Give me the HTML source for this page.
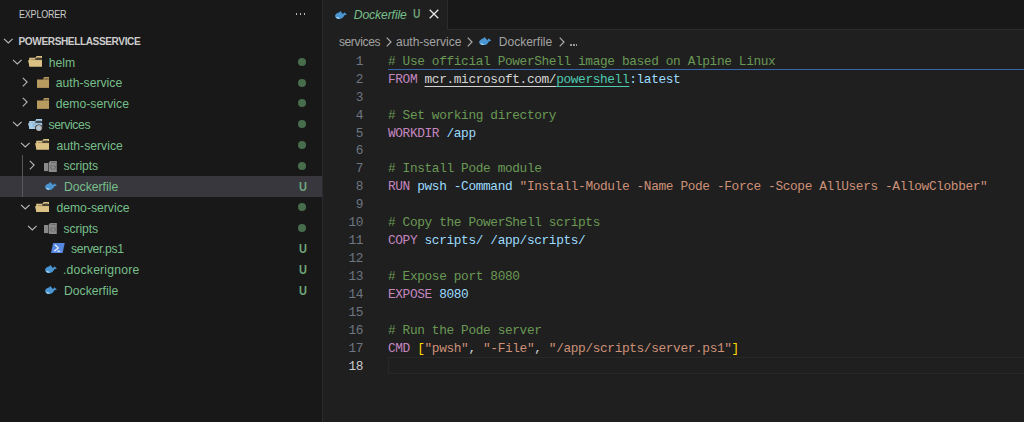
<!DOCTYPE html><html><head><meta charset="utf-8"><style>
html,body{margin:0;padding:0;width:1024px;height:422px;overflow:hidden;background:#1f1f1f;}
.a{position:absolute;}
.t{position:absolute;white-space:pre;font-family:"Liberation Sans",sans-serif;}
.row{position:absolute;left:0;width:322px;height:20.75px;}
.lbl{position:absolute;white-space:pre;font-family:"Liberation Sans",sans-serif;font-size:12.2px;line-height:20.75px;top:1px;color:#77bf8a;}
.dot{position:absolute;left:298.3px;width:8px;height:8px;border-radius:50%;background:#476d4d;top:6.375px;}
.u{position:absolute;left:299.3px;top:1px;line-height:20.75px;font-family:"Liberation Sans",sans-serif;font-size:12.2px;font-weight:bold;transform:scaleX(0.9);transform-origin:0 0;color:#70a87c;}
.ln{position:absolute;left:330px;width:33px;text-align:right;font-family:"Liberation Mono",monospace;font-size:12.8px;letter-spacing:-0.3700000000000001px;line-height:17.95px;color:#6e7681;white-space:pre;}
.cl{position:absolute;left:388.0px;font-family:"Liberation Mono",monospace;font-size:12.8px;letter-spacing:-0.3700000000000001px;line-height:17.95px;color:#cccccc;white-space:pre;}
.c{color:#6a9955} .k{color:#c586c0} .s{color:#ce9178} .v{color:#9cdcfe} .w{color:#d4d4d4} .g{color:#4ec9b0} .b{color:#ffd700}
</style></head><body>
<div class="a" style="left:0;top:0;width:322px;height:422px;background:#181818;"></div>
<div class="a" style="left:321.5px;top:0;width:1px;height:422px;background:#2b2b2b;"></div>
<div class="t" style="left:18.5px;top:7.1px;font-size:10.3px;line-height:16px;letter-spacing:-0.2px;transform:scaleX(0.87);transform-origin:0 0;color:#cccccc;">EXPLORER</div>
<div class="a" style="left:295.8px;top:13.2px;width:1.7px;height:1.7px;background:#c4c4c4;border-radius:0.3px"></div>
<div class="a" style="left:299.8px;top:13.2px;width:1.7px;height:1.7px;background:#c4c4c4;border-radius:0.3px"></div>
<div class="a" style="left:303.8px;top:13.2px;width:1.7px;height:1.7px;background:#c4c4c4;border-radius:0.3px"></div>
<svg class="a" style="left:3.4px;top:38.0px" width="11" height="7" viewBox="0 0 11 7"><path d="M1 0.8 L5.3 5 L9.6 0.8" fill="none" stroke="#b6b6b6" stroke-width="1.15"/></svg>
<div class="t" style="left:18.5px;top:31.8px;font-size:10.1px;line-height:20px;font-weight:bold;letter-spacing:-0.4px;color:#cccccc;">POWERSHELLASSERVICE</div>
<div class="row" style="top:51.50px;">
<svg class="a" style="left:12.0px;top:7.0px" width="11" height="7" viewBox="0 0 11 7"><path d="M1 0.8 L5.3 5 L9.6 0.8" fill="none" stroke="#b6b6b6" stroke-width="1.15"/></svg>
<svg class="a" style="left:27.8px;top:4.8px" width="14" height="10.5" viewBox="0 0 14 10.5"><path d="M7.1 2.2 L8.6 0 H14 V2.2 Z" fill="#dcc185"/><path d="M1.2 1.8 H7.4 V4 H14 V10.4 H1.2 Z" fill="#dcc185"/><rect x="3" y="3.5" width="11" height="0.8" fill="#7a6b4e"/><rect x="8.6" y="1.1" width="4.6" height="0.8" fill="#8d7c5a"/><path d="M0 4.3 H14 V10.4 H1.6 Z" fill="#dcc185"/></svg>
<div class="lbl" style="left:48.8px;letter-spacing:0px">helm</div>
<div class="dot"></div>
</div>
<div class="row" style="top:72.25px;">
<svg class="a" style="left:21.6px;top:4.4px" width="7" height="11" viewBox="0 0 7 11"><path d="M0.8 0.8 L5.1 5.1 L0.8 9.4" fill="none" stroke="#b6b6b6" stroke-width="1.15"/></svg>
<svg class="a" style="left:36.8px;top:4.5px" width="12.6" height="11" viewBox="0 0 12.6 11"><path d="M6 2.6 L7 0 H12.6 V2.6 Z" fill="#b99a5f"/><path d="M0 2.5 H12.6 V10.9 H0 Z" fill="#b99a5f"/><rect x="7.4" y="1.1" width="4.2" height="0.9" fill="#7b6642"/></svg>
<div class="lbl" style="left:55.8px;letter-spacing:0px">auth-service</div>
<div class="dot"></div>
</div>
<div class="row" style="top:93.00px;">
<svg class="a" style="left:21.6px;top:4.4px" width="7" height="11" viewBox="0 0 7 11"><path d="M0.8 0.8 L5.1 5.1 L0.8 9.4" fill="none" stroke="#b6b6b6" stroke-width="1.15"/></svg>
<svg class="a" style="left:36.8px;top:4.5px" width="12.6" height="11" viewBox="0 0 12.6 11"><path d="M6 2.6 L7 0 H12.6 V2.6 Z" fill="#b99a5f"/><path d="M0 2.5 H12.6 V10.9 H0 Z" fill="#b99a5f"/><rect x="7.4" y="1.1" width="4.2" height="0.9" fill="#7b6642"/></svg>
<div class="lbl" style="left:55.8px;letter-spacing:0px">demo-service</div>
<div class="dot"></div>
</div>
<div class="row" style="top:113.75px;">
<svg class="a" style="left:12.0px;top:7.0px" width="11" height="7" viewBox="0 0 11 7"><path d="M1 0.8 L5.3 5 L9.6 0.8" fill="none" stroke="#b6b6b6" stroke-width="1.15"/></svg>
<svg class="a" style="left:27.8px;top:5.2px" width="15" height="13" viewBox="0 0 15 13"><path d="M7.1 2.2 L8.3 0 H14.1 V2.2 Z" fill="#a7cde8"/><path d="M1.2 1.9 H7.4 V4.2 H14.1 V10 H1.2 Z" fill="#a7cde8"/><rect x="8.6" y="1" width="4.8" height="0.7" fill="#7f9bb0"/><rect x="3" y="3.6" width="11" height="0.7" fill="#7f9bb0"/><path d="M0 4.3 H14.1 V10 H1.6 Z" fill="#a7cde8"/><circle cx="6.4" cy="6.4" r="1.4" fill="none" stroke="#88a0b2" stroke-width="0.8"/><circle cx="10.9" cy="9.1" r="3.7" fill="#181818"/><circle cx="10.9" cy="9.1" r="2.3" fill="#a9c9de" stroke="#b5b5b5" stroke-width="1.4"/></svg>
<div class="lbl" style="left:48.4px;letter-spacing:-0.35px">services</div>
<div class="dot"></div>
</div>
<div class="row" style="top:134.50px;">
<svg class="a" style="left:19.6px;top:7.0px" width="11" height="7" viewBox="0 0 11 7"><path d="M1 0.8 L5.3 5 L9.6 0.8" fill="none" stroke="#b6b6b6" stroke-width="1.15"/></svg>
<svg class="a" style="left:35.4px;top:4.8px" width="14" height="10.5" viewBox="0 0 14 10.5"><path d="M7.1 2.2 L8.6 0 H14 V2.2 Z" fill="#dcc185"/><path d="M1.2 1.8 H7.4 V4 H14 V10.4 H1.2 Z" fill="#dcc185"/><rect x="3" y="3.5" width="11" height="0.8" fill="#7a6b4e"/><rect x="8.6" y="1.1" width="4.6" height="0.8" fill="#8d7c5a"/><path d="M0 4.3 H14 V10.4 H1.6 Z" fill="#dcc185"/></svg>
<div class="lbl" style="left:56.4px;letter-spacing:0px">auth-service</div>
<div class="dot"></div>
</div>
<div class="row" style="top:155.25px;">
<svg class="a" style="left:29.200000000000003px;top:4.4px" width="7" height="11" viewBox="0 0 7 11"><path d="M0.8 0.8 L5.1 5.1 L0.8 9.4" fill="none" stroke="#b6b6b6" stroke-width="1.15"/></svg>
<svg class="a" style="left:44.3px;top:5.3px" width="13" height="12" viewBox="0 0 13 12"><rect x="0" y="2" width="4.4" height="8.1" fill="#8a8a8a"/><path d="M4.9 1.5 L6.3 0 H12.8 V11 H4.9 Z" fill="#8a8a8a"/><rect x="7.2" y="0.9" width="4.6" height="0.7" fill="#5c5c5c"/><path d="M8.1 4.2 L6.6 6.4 L8.1 8.6 M10.1 4.2 L11.5 6.4 L10.1 8.6" stroke="#5a5a5a" stroke-width="0.9" fill="none"/></svg>
<div class="lbl" style="left:63.5px;letter-spacing:-0.1px">scripts</div>
<div class="dot"></div>
</div>
<div class="row" style="top:176.00px;background:#37373d;">
<svg class="a" style="left:44.9px;top:6.2px" width="12" height="8" viewBox="0 0 12 8"><path d="M0.1 4.6 C0.4 3.1 2.3 1.7 4.5 1.2 L5.1 0.1 C5.7 0.3 6.1 0.8 6.3 1.3 C7.1 1.8 7.6 2.6 8 3.3 C8.3 2.7 8.8 1.9 9.4 1.3 C9.8 2.1 10.7 2.8 11.9 3.3 C10.9 4.1 10 4.2 9.4 4.3 C8.5 6.6 6.6 8 4.2 8 C1.9 8 -0.1 6.7 0.1 4.6 Z" fill="#4b96d2"/><path d="M1.6 6.2 C2.2 6.9 3.2 7.2 4.4 7.2" stroke="#b6dbf2" stroke-width="1.1" fill="none"/></svg>
<div class="lbl" style="left:64.0px;letter-spacing:0px">Dockerfile</div>
<div class="u">U</div>
</div>
<div class="row" style="top:196.75px;">
<svg class="a" style="left:19.6px;top:7.0px" width="11" height="7" viewBox="0 0 11 7"><path d="M1 0.8 L5.3 5 L9.6 0.8" fill="none" stroke="#b6b6b6" stroke-width="1.15"/></svg>
<svg class="a" style="left:35.4px;top:4.8px" width="14" height="10.5" viewBox="0 0 14 10.5"><path d="M7.1 2.2 L8.6 0 H14 V2.2 Z" fill="#dcc185"/><path d="M1.2 1.8 H7.4 V4 H14 V10.4 H1.2 Z" fill="#dcc185"/><rect x="3" y="3.5" width="11" height="0.8" fill="#7a6b4e"/><rect x="8.6" y="1.1" width="4.6" height="0.8" fill="#8d7c5a"/><path d="M0 4.3 H14 V10.4 H1.6 Z" fill="#dcc185"/></svg>
<div class="lbl" style="left:56.4px;letter-spacing:0px">demo-service</div>
<div class="dot"></div>
</div>
<div class="row" style="top:217.50px;">
<svg class="a" style="left:27.2px;top:7.0px" width="11" height="7" viewBox="0 0 11 7"><path d="M1 0.8 L5.3 5 L9.6 0.8" fill="none" stroke="#b6b6b6" stroke-width="1.15"/></svg>
<svg class="a" style="left:44.3px;top:5.3px" width="13" height="12" viewBox="0 0 13 12"><rect x="0" y="2" width="4.4" height="8.1" fill="#8a8a8a"/><path d="M4.9 1.5 L6.3 0 H12.8 V11 H4.9 Z" fill="#8a8a8a"/><rect x="7.2" y="0.9" width="4.6" height="0.7" fill="#5c5c5c"/><path d="M8.1 4.2 L6.6 6.4 L8.1 8.6 M10.1 4.2 L11.5 6.4 L10.1 8.6" stroke="#5a5a5a" stroke-width="0.9" fill="none"/></svg>
<div class="lbl" style="left:63.5px;letter-spacing:-0.1px">scripts</div>
<div class="dot"></div>
</div>
<div class="row" style="top:238.25px;">
<svg class="a" style="left:51.1px;top:4.4px" width="14" height="10" viewBox="0 0 14 10"><path d="M2.1 0 H13.7 L11.7 10 H0 Z" fill="#5586e0"/><path d="M3.9 1.7 L7.3 4.9 L3.2 8.3" stroke="#eef2fc" stroke-width="1.25" fill="none"/><path d="M6.2 8.2 H9.3" stroke="#eef2fc" stroke-width="1.1"/></svg>
<div class="lbl" style="left:71.0px;letter-spacing:-0.35px">server.ps1</div>
<div class="u">U</div>
</div>
<div class="row" style="top:259.00px;">
<svg class="a" style="left:44.9px;top:6.2px" width="12" height="8" viewBox="0 0 12 8"><path d="M0.1 4.6 C0.4 3.1 2.3 1.7 4.5 1.2 L5.1 0.1 C5.7 0.3 6.1 0.8 6.3 1.3 C7.1 1.8 7.6 2.6 8 3.3 C8.3 2.7 8.8 1.9 9.4 1.3 C9.8 2.1 10.7 2.8 11.9 3.3 C10.9 4.1 10 4.2 9.4 4.3 C8.5 6.6 6.6 8 4.2 8 C1.9 8 -0.1 6.7 0.1 4.6 Z" fill="#4b96d2"/><path d="M1.6 6.2 C2.2 6.9 3.2 7.2 4.4 7.2" stroke="#b6dbf2" stroke-width="1.1" fill="none"/></svg>
<div class="lbl" style="left:63.0px;letter-spacing:0.2px">.dockerignore</div>
<div class="u">U</div>
</div>
<div class="row" style="top:279.75px;">
<svg class="a" style="left:44.9px;top:6.2px" width="12" height="8" viewBox="0 0 12 8"><path d="M0.1 4.6 C0.4 3.1 2.3 1.7 4.5 1.2 L5.1 0.1 C5.7 0.3 6.1 0.8 6.3 1.3 C7.1 1.8 7.6 2.6 8 3.3 C8.3 2.7 8.8 1.9 9.4 1.3 C9.8 2.1 10.7 2.8 11.9 3.3 C10.9 4.1 10 4.2 9.4 4.3 C8.5 6.6 6.6 8 4.2 8 C1.9 8 -0.1 6.7 0.1 4.6 Z" fill="#4b96d2"/><path d="M1.6 6.2 C2.2 6.9 3.2 7.2 4.4 7.2" stroke="#b6dbf2" stroke-width="1.1" fill="none"/></svg>
<div class="lbl" style="left:64.0px;letter-spacing:0px">Dockerfile</div>
<div class="u">U</div>
</div>
<div class="a" style="left:22px;top:155.25px;width:1px;height:41.50px;background:#585858;"></div>
<div class="a" style="left:322.5px;top:0;width:701.5px;height:29px;background:#181818;"></div>
<div class="a" style="left:447px;top:29.4px;width:577px;height:1px;background:#2b2b2b;"></div>
<div class="a" style="left:322.5px;top:0;width:124px;height:30px;background:#1f1f1f;"></div>
<div class="a" style="left:446.5px;top:0;width:1px;height:30px;background:#2b2b2b;"></div>
<svg class="a" style="left:335.4px;top:10.5px" width="12" height="8" viewBox="0 0 12 8"><path d="M0.1 4.6 C0.4 3.1 2.3 1.7 4.5 1.2 L5.1 0.1 C5.7 0.3 6.1 0.8 6.3 1.3 C7.1 1.8 7.6 2.6 8 3.3 C8.3 2.7 8.8 1.9 9.4 1.3 C9.8 2.1 10.7 2.8 11.9 3.3 C10.9 4.1 10 4.2 9.4 4.3 C8.5 6.6 6.6 8 4.2 8 C1.9 8 -0.1 6.7 0.1 4.6 Z" fill="#4b96d2"/><path d="M1.6 6.2 C2.2 6.9 3.2 7.2 4.4 7.2" stroke="#b6dbf2" stroke-width="1.1" fill="none"/></svg>
<div class="t" style="left:353.8px;top:5px;font-size:12.2px;line-height:20px;font-style:italic;letter-spacing:-0.13px;color:#77bf8a;">Dockerfile</div>
<div class="t" style="left:412.6px;top:4.3px;font-size:12.4px;font-weight:bold;transform:scaleX(0.83);transform-origin:0 0;line-height:20px;color:#6c9c74;">U</div>
<svg class="a" style="left:428.5px;top:9.2px" width="10" height="10" viewBox="0 0 10 10"><path d="M0.7 0.7 L9.3 9.3 M9.3 0.7 L0.7 9.3" stroke="#e8e8e8" stroke-width="1.3"/></svg>
<div class="t" style="left:338.9px;top:31.5px;font-size:12px;line-height:20px;letter-spacing:-0.35px;color:#a3a3a3;">services</div>
<svg class="a" style="left:385.9px;top:36.5px" width="6" height="10" viewBox="0 0 6 10"><path d="M0.7 0.7 L5 5 L0.7 9.3" stroke="#acacac" stroke-width="1.2" fill="none"/></svg>
<div class="t" style="left:396px;top:31.5px;font-size:12px;line-height:20px;color:#a3a3a3;">auth-service</div>
<svg class="a" style="left:467px;top:36.5px" width="6" height="10" viewBox="0 0 6 10"><path d="M0.7 0.7 L5 5 L0.7 9.3" stroke="#acacac" stroke-width="1.2" fill="none"/></svg>
<svg class="a" style="left:478.5px;top:37px" width="12.5" height="8.3" viewBox="0 0 12 8"><path d="M0.1 4.6 C0.4 3.1 2.3 1.7 4.5 1.2 L5.1 0.1 C5.7 0.3 6.1 0.8 6.3 1.3 C7.1 1.8 7.6 2.6 8 3.3 C8.3 2.7 8.8 1.9 9.4 1.3 C9.8 2.1 10.7 2.8 11.9 3.3 C10.9 4.1 10 4.2 9.4 4.3 C8.5 6.6 6.6 8 4.2 8 C1.9 8 -0.1 6.7 0.1 4.6 Z" fill="#4b96d2"/><path d="M1.6 6.2 C2.2 6.9 3.2 7.2 4.4 7.2" stroke="#b6dbf2" stroke-width="1.1" fill="none"/></svg>
<div class="t" style="left:498.8px;top:31.5px;font-size:12px;line-height:20px;color:#a3a3a3;">Dockerfile</div>
<svg class="a" style="left:559px;top:36.5px" width="6" height="10" viewBox="0 0 6 10"><path d="M0.7 0.7 L5 5 L0.7 9.3" stroke="#acacac" stroke-width="1.2" fill="none"/></svg>
<div class="a" style="left:570.3px;top:44.2px;width:1.4px;height:1.4px;background:#999999;"></div>
<div class="a" style="left:573.1999999999999px;top:44.2px;width:1.4px;height:1.4px;background:#999999;"></div>
<div class="a" style="left:576.0999999999999px;top:44.2px;width:1.4px;height:1.4px;background:#999999;"></div>
<div class="a" style="left:388px;top:356.85px;width:640px;height:17px;border:1px solid #282828;box-sizing:border-box;"></div>
<div class="a" style="left:388px;top:68.9px;width:636px;height:1.3px;background:#3766b0;"></div>
<div class="ln" style="top:52.70px;color:#6e7681">1</div>
<div class="cl" style="top:52.70px"><span class="c"># Use official PowerShell image based on Alpine Linux</span></div>
<div class="ln" style="top:70.65px;color:#6e7681">2</div>
<div class="cl" style="top:70.65px"><span class="k">FROM</span> <span class="w" style="text-decoration:underline;text-underline-offset:2.6px;text-decoration-thickness:1px;">mcr.microsoft.com/</span><span class="g" style="text-decoration:underline;text-underline-offset:2.6px;text-decoration-thickness:1px;">powershell</span><span class="v">:latest</span></div>
<div class="ln" style="top:88.60px;color:#6e7681">3</div>
<div class="ln" style="top:106.55px;color:#6e7681">4</div>
<div class="cl" style="top:106.55px"><span class="c"># Set working directory</span></div>
<div class="ln" style="top:124.50px;color:#6e7681">5</div>
<div class="cl" style="top:124.50px"><span class="k">WORKDIR</span> <span class="v">/app</span></div>
<div class="ln" style="top:142.45px;color:#6e7681">6</div>
<div class="ln" style="top:160.40px;color:#6e7681">7</div>
<div class="cl" style="top:160.40px"><span class="c"># Install Pode module</span></div>
<div class="ln" style="top:178.35px;color:#6e7681">8</div>
<div class="cl" style="top:178.35px"><span class="k">RUN</span> <span class="v">pwsh -Command </span><span class="s">"Install-Module -Name Pode -Force -Scope AllUsers -AllowClobber"</span></div>
<div class="ln" style="top:196.30px;color:#6e7681">9</div>
<div class="ln" style="top:214.25px;color:#6e7681">10</div>
<div class="cl" style="top:214.25px"><span class="c"># Copy the PowerShell scripts</span></div>
<div class="ln" style="top:232.20px;color:#6e7681">11</div>
<div class="cl" style="top:232.20px"><span class="k">COPY</span> <span class="v">scripts/ /app/scripts/</span></div>
<div class="ln" style="top:250.15px;color:#6e7681">12</div>
<div class="ln" style="top:268.10px;color:#6e7681">13</div>
<div class="cl" style="top:268.10px"><span class="c"># Expose port 8080</span></div>
<div class="ln" style="top:286.05px;color:#6e7681">14</div>
<div class="cl" style="top:286.05px"><span class="k">EXPOSE</span> <span class="v">8080</span></div>
<div class="ln" style="top:304.00px;color:#6e7681">15</div>
<div class="ln" style="top:321.95px;color:#6e7681">16</div>
<div class="cl" style="top:321.95px"><span class="c"># Run the Pode server</span></div>
<div class="ln" style="top:339.90px;color:#6e7681">17</div>
<div class="cl" style="top:339.90px"><span class="k">CMD</span> <span class="b">[</span><span class="s">"pwsh"</span><span class="w">, </span><span class="s">"-File"</span><span class="w">, </span><span class="s">"/app/scripts/server.ps1"</span><span class="b">]</span></div>
<div class="ln" style="top:357.85px;color:#cccccc">18</div>
</body></html>
